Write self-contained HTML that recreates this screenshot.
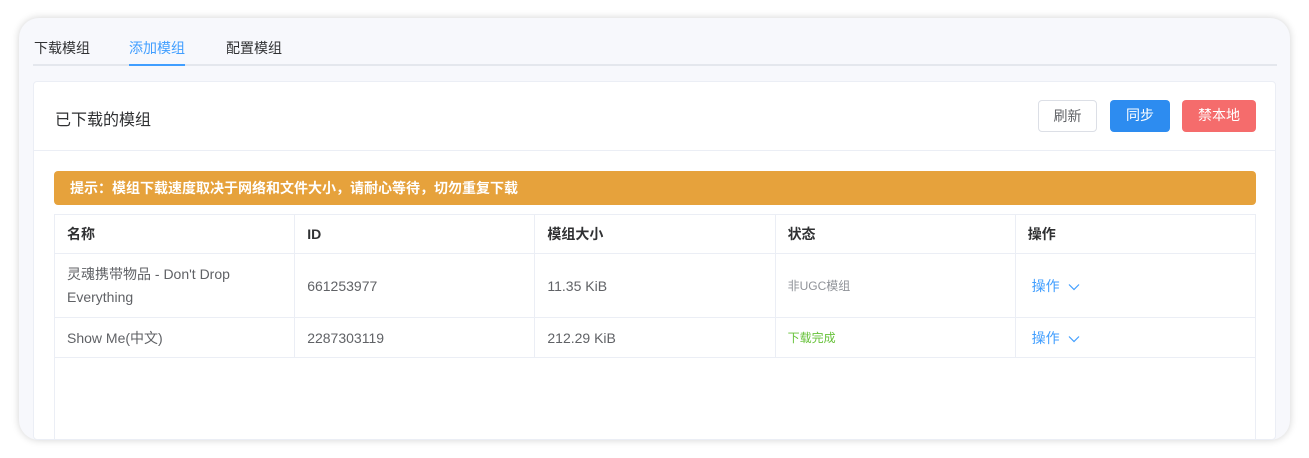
<!DOCTYPE html>
<html><head><meta charset="utf-8"><style>
*{box-sizing:border-box;margin:0;padding:0}
html,body{width:1309px;height:458px;overflow:hidden}
body{background:#fff;font-family:"Liberation Sans","Noto Sans CJK SC",sans-serif;position:relative;color:#303133}
.outer{position:absolute;left:19px;top:18px;width:1271px;height:422px;background:#f7f8fc;border-radius:20px;box-shadow:0 0 8px rgba(0,0,0,.18);overflow:hidden}
.tabs{position:absolute;left:14px;top:0;width:1244px;height:48px;border-bottom:2px solid #e4e7ed}
.tab{position:absolute;top:20px;font-size:14px;color:#303133}
.tab.act{color:#409eff}
.bar{position:absolute;left:110px;top:46px;width:56px;height:2px;background:#409eff}
.card{position:absolute;left:14px;top:63px;width:1243px;height:359px;background:#fff;border:1px solid #ebeef5;border-radius:4px;overflow:hidden}
.hd{height:69px;border-bottom:1px solid #ebeef5;position:relative}
.title{position:absolute;left:21px;top:24px;font-size:16px}
.btn{position:absolute;top:18px;height:32px;border-radius:4px;font-size:14px;text-align:center;line-height:31px}
.alert{position:absolute;left:20px;top:89px;width:1202px;height:34px;background:#e6a23c;border-radius:4px;color:#fff;font-size:14px;font-weight:bold;line-height:34px;padding-left:16px}
table{position:absolute;left:20px;top:132px;width:1202px;border-collapse:collapse;font-size:14px}
td{border:1px solid #ebeef5;padding:0 12px;width:240px;vertical-align:middle}
.op{color:#409eff}
</style></head><body>
<div class="outer">
<div class="tabs">
<span class="tab" style="left:1px">下载模组</span>
<span class="tab act" style="left:96px">添加模组</span>
<span class="tab" style="left:193px">配置模组</span>
</div>
<div class="bar"></div>
<div class="card">
<div class="hd"><span class="title">已下载的模组</span>
<div class="btn" style="left:1004px;width:59px;border:1px solid #dcdfe6;color:#606266">刷新</div>
<div class="btn" style="left:1076px;width:60px;background:#2d8cf0;color:#fff">同步</div>
<div class="btn" style="left:1148px;width:74px;background:#f56c6c;color:#fff">禁本地</div>
</div>
<div class="alert">提示：模组下载速度取决于网络和文件大小，请耐心等待，切勿重复下载</div>
<table>
<tr style="height:39px;font-weight:bold;color:#303133"><td>名称</td><td>ID</td><td>模组大小</td><td>状态</td><td>操作</td></tr>
<tr style="height:64px;color:#606266"><td style="line-height:23px">灵魂携带物品 - Don't Drop Everything</td><td>661253977</td><td>11.35 KiB</td><td style="font-size:12px;color:#909399">非UGC模组</td><td class="op">&nbsp;操作 <svg width="12" height="8" viewBox="0 0 12 8" style="margin-left:4px"><path d="M1 1.5 6 6.5 11 1.5" fill="none" stroke="#409eff" stroke-width="1.2"/></svg></td></tr>
<tr style="height:40px;color:#606266"><td>Show Me(中文)</td><td>2287303119</td><td>212.29 KiB</td><td style="font-size:12px;color:#67c23a">下载完成</td><td class="op">&nbsp;操作 <svg width="12" height="8" viewBox="0 0 12 8" style="margin-left:4px"><path d="M1 1.5 6 6.5 11 1.5" fill="none" stroke="#409eff" stroke-width="1.2"/></svg></td></tr>
<tr style="height:120px"><td colspan="5" style="border-bottom:none"></td></tr>
</table>
</div>
</div>
</body></html>
